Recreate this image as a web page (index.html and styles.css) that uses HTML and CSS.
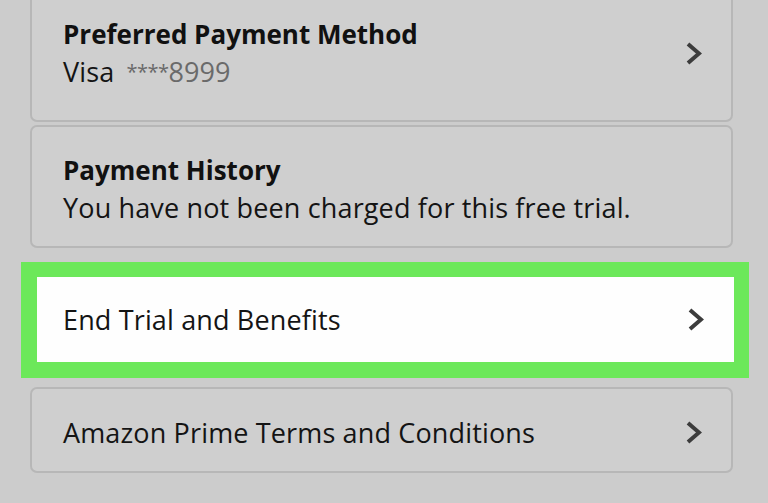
FILE: index.html
```html
<!DOCTYPE html>
<html lang="en">
<head>
<meta charset="utf-8">
<title>Prime Membership</title>
<link rel="stylesheet" href="styles.css">
</head>
<body>
<main class="list">
  <a class="card card-first" href="#">
    <div class="card-text">
      <div class="title">Preferred Payment Method</div>
      <div class="sub">Visa <span class="muted"><span class="stars">****</span>8999</span></div>
    </div>
    <svg class="chev" viewBox="0 0 16 23" aria-hidden="true"><path d="M2 2 L13 11.5 L2 21"/></svg>
  </a>
  <div class="card card-static">
    <div class="card-text">
      <div class="title">Payment History</div>
      <div class="sub">You have not been charged for this free trial.</div>
    </div>
  </div>
  <div class="highlight">
    <a class="row-white" href="#">
      <span class="label">End Trial and Benefits</span>
      <svg class="chev" viewBox="0 0 16 23" aria-hidden="true"><path d="M2 2 L13 11.5 L2 21"/></svg>
    </a>
  </div>
  <a class="card card-last" href="#">
    <span class="label">Amazon Prime Terms and Conditions</span>
    <svg class="chev" viewBox="0 0 16 23" aria-hidden="true"><path d="M2 2 L13 11.5 L2 21"/></svg>
  </a>
</main>
</body>
</html>
```
FILE: styles.css
```css
html, body {
  margin: 0;
  padding: 0;
  background: #cccccc;
  height: 503px;
  overflow: hidden;
}
body {
  font-family: "Open Sans", "Noto Sans", sans-serif;
  font-size: 26px;
  color: #141414;
}
.list {
  display: flex;
  flex-direction: column;
  width: 768px;
}
.card {
  box-sizing: border-box;
  margin-left: 30px;
  width: 703px;
  border: 2px solid #b7b7b7;
  border-radius: 7px;
  background: #cfcfcf;
  display: flex;
  align-items: center;
  justify-content: space-between;
  padding: 0 29px 0 31px;
  color: inherit;
  text-decoration: none;
}
.card-first {
  margin-top: -16px;
  height: 138px;
}
.card-static {
  margin-top: 3px;
  height: 123px;
  padding-top: 4px;
}
.card-last {
  margin-top: 9px;
  height: 86px;
  padding-top: 4px;
}
.card-text {
  display: flex;
  flex-direction: column;
}
.title {
  font-weight: 700;
  line-height: 37px;
  color: #111;
}
.sub,
.label {
  font-size: 27px;
  letter-spacing: 0.15px;
  line-height: 37px;
}
.muted {
  color: #6a6a6a;
  margin-left: 5px;
  letter-spacing: 0;
}
.stars {
  font-size: 20px;
  letter-spacing: -0.5px;
  vertical-align: 3px;
}
.highlight {
  box-sizing: border-box;
  margin-top: 14px;
  margin-left: 21px;
  width: 728px;
  height: 116px;
  background: #6ce85a;
  padding: 15px 15px 16px 16px;
}
.row-white {
  box-sizing: border-box;
  height: 85px;
  background: #fefefe;
  display: flex;
  align-items: center;
  justify-content: space-between;
  padding: 0 30px 0 26px;
  color: inherit;
  text-decoration: none;
}
.chev {
  width: 16px;
  height: 23px;
  flex: none;
}
.chev path {
  fill: none;
  stroke: #3c3c3c;
  stroke-width: 4;
  stroke-linejoin: miter;
}
```
